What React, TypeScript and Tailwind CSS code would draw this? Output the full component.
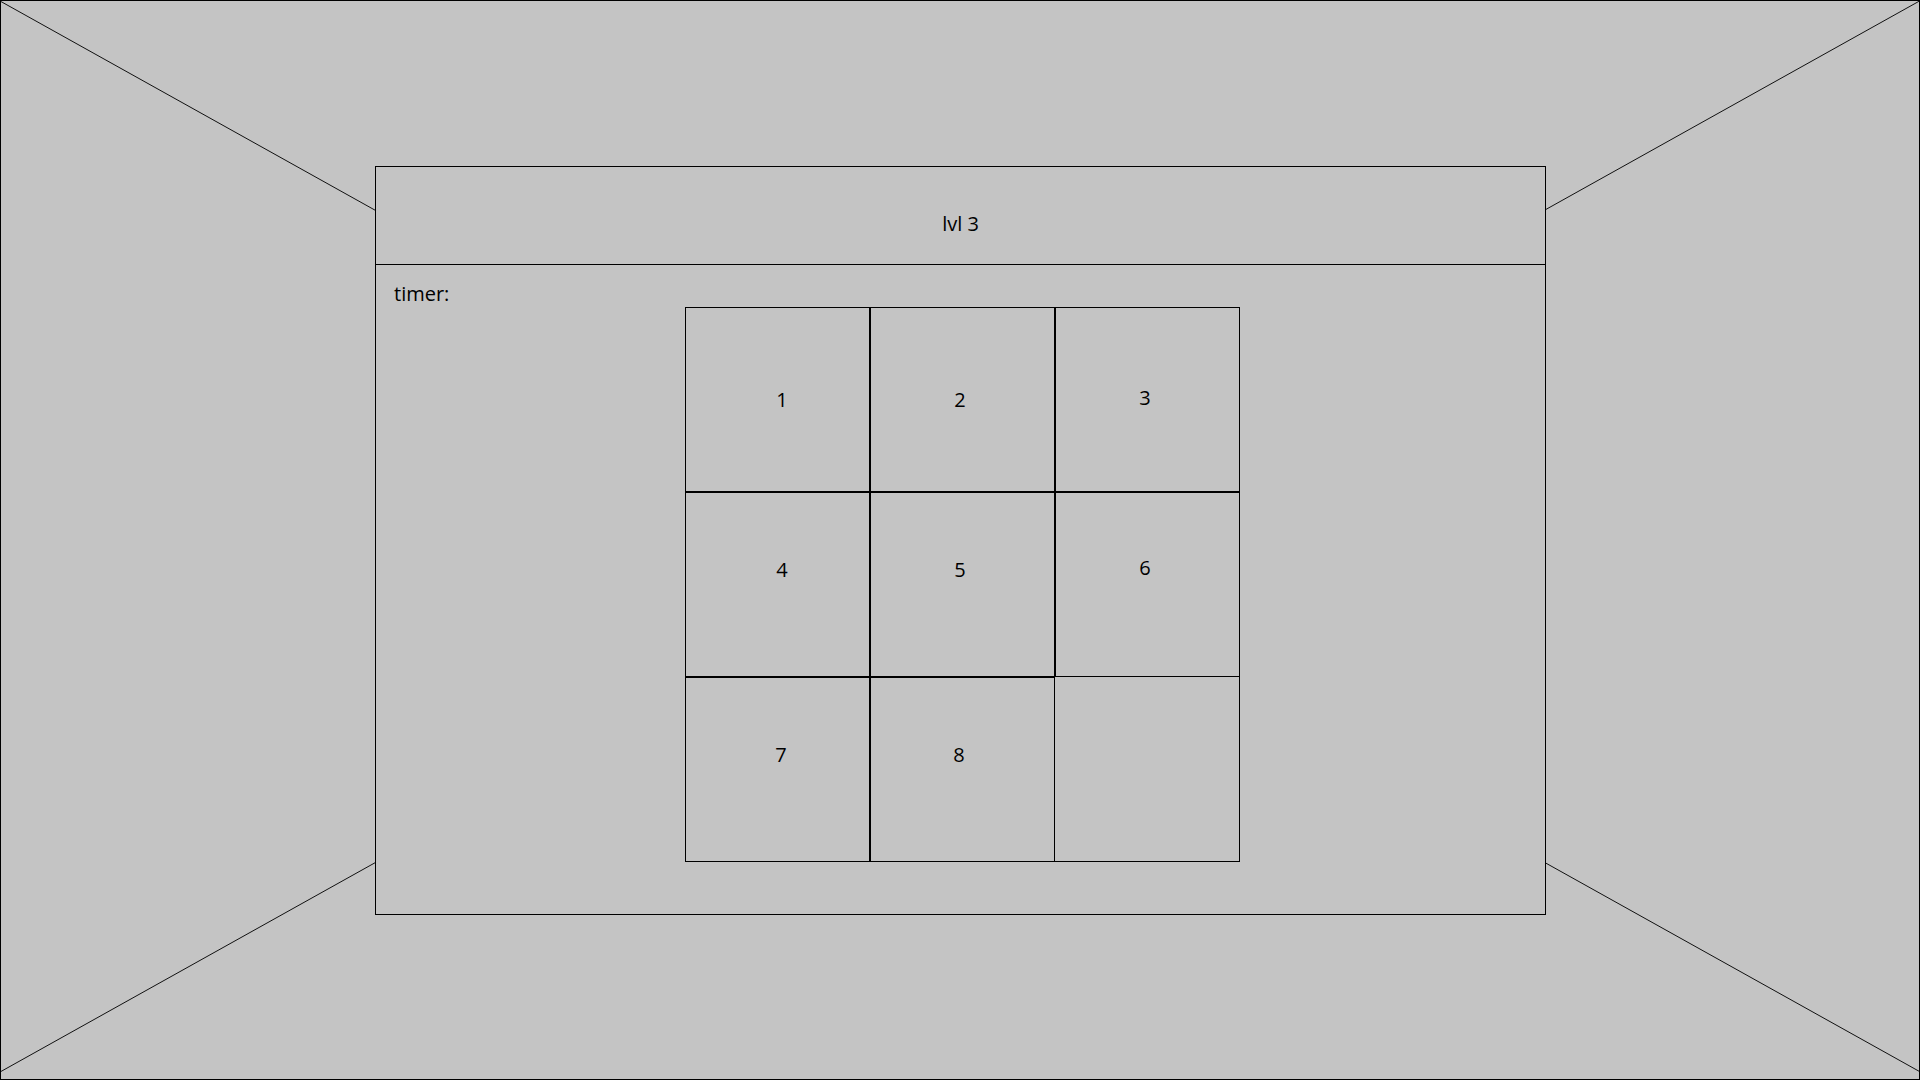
import React from "react";

type Cell = { n: string; pt: string; px: string };

const cells: Cell[] = [
  { n: "1", pt: "pt-[78px]", px: "pl-[9px]" },
  { n: "2", pt: "pt-[78px]", px: "pr-[5px]" },
  { n: "3", pt: "pt-[76px]", px: "pr-[5px]" },
  { n: "4", pt: "pt-[63px]", px: "pl-[9px]" },
  { n: "5", pt: "pt-[63px]", px: "pr-[5px]" },
  { n: "6", pt: "pt-[61px]", px: "pr-[5px]" },
  { n: "7", pt: "pt-[63px]", px: "pl-[7px]" },
  { n: "8", pt: "pt-[63px]", px: "pr-[7px]" },
];

export default function App() {
  return (
    <div className="relative w-[1920px] h-[1080px] bg-[#c4c4c4] border border-black overflow-hidden font-['Open_Sans',sans-serif] text-black">
      <svg
        className="absolute top-[-1px] left-[-1px] w-[1920px] h-[1080px]"
        viewBox="0 0 1920 1080"
        fill="none"
      >
        <line x1="0" y1="1" x2="1919.5" y2="1071.5" stroke="#111" strokeWidth="1" />
        <line x1="1919.5" y1="1" x2="0" y2="1072" stroke="#111" strokeWidth="1" />
      </svg>
      <div className="relative pl-[374px] pt-[165px]">
        <div className="w-[1171px] h-[749px] border border-black bg-[#c4c4c4] flex flex-col">
          <div className="h-[98px] border-b border-black flex justify-center pt-[43px] text-[20px] leading-[27px]">
            lvl 3
          </div>
          <div className="flex flex-col pl-[18px] pt-[15px]">
            <div className="text-[20px] leading-[27px]">timer:</div>
            <div className="ml-[291px] grid grid-cols-[185px_185px_185px] grid-rows-[185px_185px_185px] w-[555px]">
              {cells.map((c) => (
                <div
                  key={c.n}
                  className={`border border-black flex justify-center ${c.pt} ${c.px} text-[20px] leading-[27px]`}
                >
                  {c.n}
                </div>
              ))}
              <div className="border-r border-b border-black" />
            </div>
          </div>
        </div>
      </div>
    </div>
  );
}
